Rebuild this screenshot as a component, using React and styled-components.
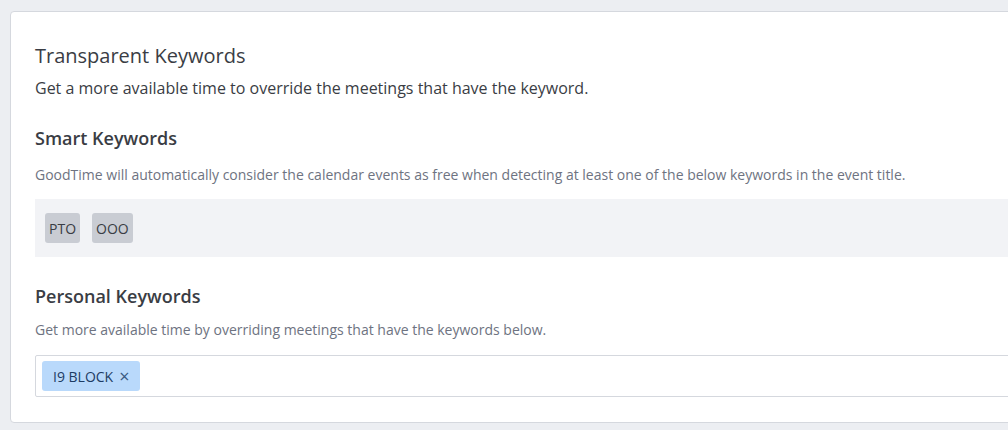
import React from "react";
import styled, { createGlobalStyle } from "styled-components";

const GlobalStyle = createGlobalStyle`
  html, body {
    margin: 0;
    padding: 0;
    background: #eceef2;
    overflow: hidden;
  }
  body {
    font-family: "Open Sans", "Liberation Sans", sans-serif;
    -webkit-font-smoothing: antialiased;
  }
`;

const Page = styled.div`
  padding: 11px 0 0 10px;
  height: 430px;
  box-sizing: border-box;
`;

const Card = styled.section`
  width: 1030px;
  background: #fff;
  border: 1px solid #d5d8de;
  border-radius: 4px;
  padding: 32px 24px 25px 24px;
  box-sizing: border-box;
  display: flex;
  flex-direction: column;
`;

const Title = styled.h2`
  margin: 0;
  font-size: 20px;
  font-weight: 400;
  line-height: 24px;
  color: #3a3d44;
`;

const Lead = styled.p`
  margin: 9px 0 0;
  font-size: 16px;
  line-height: 22px;
  color: #3a3d44;
`;

const Heading = styled.h3`
  margin: 27px 0 0;
  font-size: 18px;
  font-weight: 600;
  line-height: 24px;
  color: #3a3d44;
`;

const Desc = styled.p`
  margin: ${(p) => p.$gap}px 0 0;
  font-size: 14px;
  line-height: 20px;
  color: #6e7381;
`;

const KeywordBox = styled.div`
  margin-top: 14px;
  height: 58px;
  box-sizing: border-box;
  background: #f2f3f6;
  padding: 14px 10px;
  display: flex;
  gap: 12px;
`;

const Chip = styled.span`
  display: inline-flex;
  align-items: center;
  gap: 6px;
  height: 30px;
  padding: 0 ${(p) => (p.$removable ? 11 : 4)}px;
  border-radius: 3px;
  font-size: 14px;
  background: ${(p) => (p.$removable ? "#b9d9fb" : "#c9ccd3")};
  color: ${(p) => (p.$removable ? "#1d3c64" : "#3a3d44")};
  box-sizing: border-box;
`;

const Remove = styled.span`
  font-size: 18px;
  line-height: 1;
  color: #3b5a82;
`;

const TagInput = styled.div`
  margin-top: 15px;
  height: 42px;
  box-sizing: border-box;
  border: 1px solid #d5d8de;
  border-radius: 2px;
  padding: 6px 6px;
  display: flex;
  align-items: center;
`;

export default function App() {
  return (
    <Page>
      <GlobalStyle />
      <Card>
        <Title>Transparent Keywords</Title>
        <Lead>Get a more available time to override the meetings that have the keyword.</Lead>

        <Heading>Smart Keywords</Heading>
        <Desc $gap={15}>
          GoodTime will automatically consider the calendar events as free when detecting at least one of the below keywords in the event title.
        </Desc>
        <KeywordBox>
          <Chip>PTO</Chip>
          <Chip>OOO</Chip>
        </KeywordBox>

        <Heading>Personal Keywords</Heading>
        <Desc $gap={12}>Get more available time by overriding meetings that have the keywords below.</Desc>
        <TagInput>
          <Chip $removable>
            I9 BLOCK<Remove>×</Remove>
          </Chip>
        </TagInput>
      </Card>
    </Page>
  );
}
